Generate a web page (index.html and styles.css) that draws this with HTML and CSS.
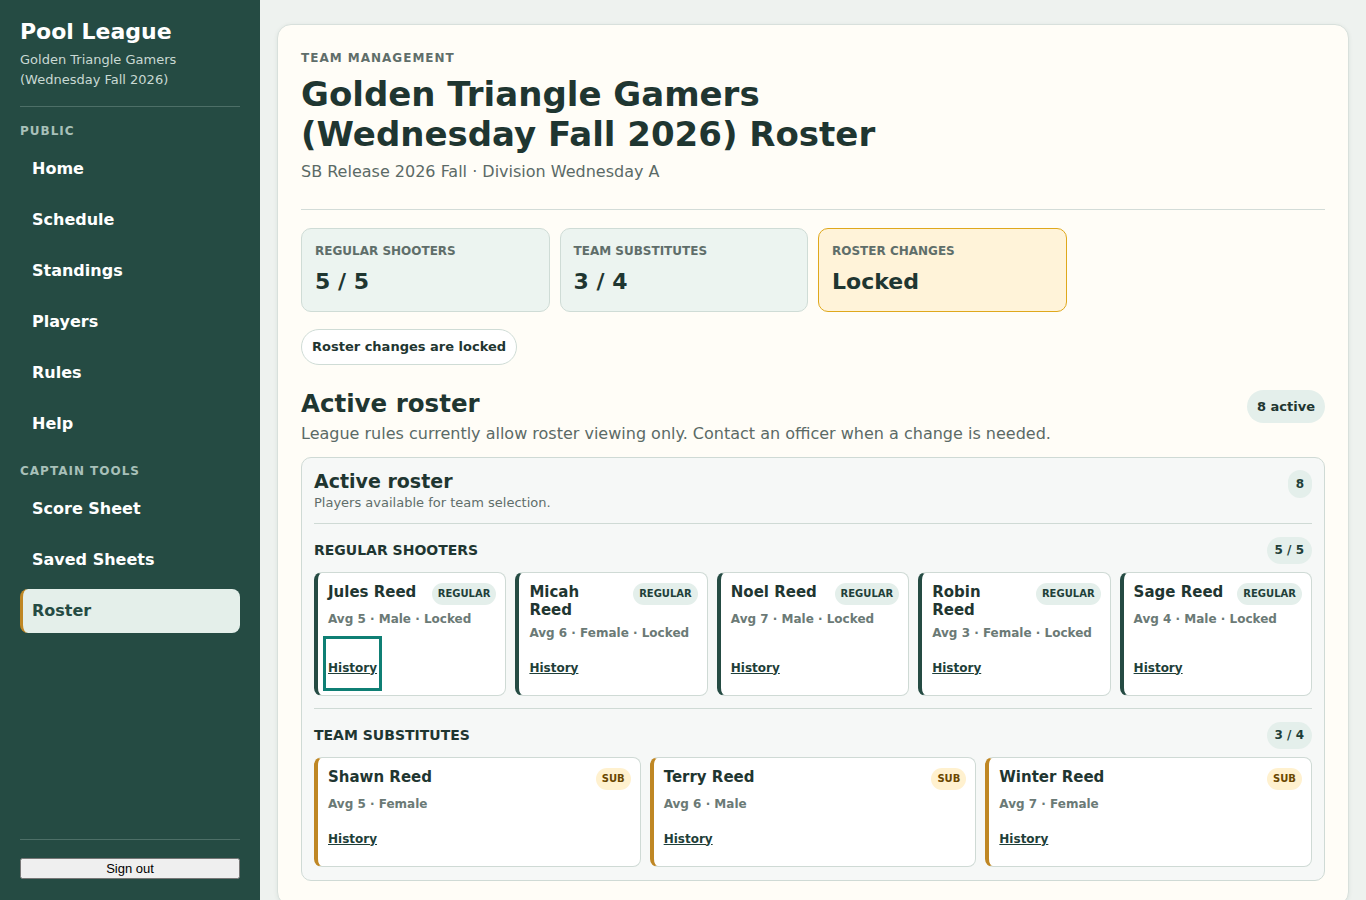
FILE: index.html
```html
<!DOCTYPE html>
<html lang="en">
<head>
  <meta charset="UTF-8" />
  <title>Roster - Pool League</title>
  <link rel="stylesheet" href="styles.css">
</head>
<body>

<div class="layout">
  <aside class="sidebar">
    <div class="brand">
      <h1>Pool League</h1>
      <p>Golden Triangle Gamers (Wednesday Fall 2026)</p>
    </div>

    <nav class="nav">
      <div class="nav-label">Public</div>
      <a class="nav-item" href="#">Home</a>
      <a class="nav-item" href="#">Schedule</a>
      <a class="nav-item" href="#">Standings</a>
      <a class="nav-item" href="#">Players</a>
      <a class="nav-item" href="#">Rules</a>
      <a class="nav-item" href="#">Help</a>
      <div class="nav-label spaced">Captain tools</div>
      <a class="nav-item" href="#">Score Sheet</a>
      <a class="nav-item" href="#">Saved Sheets</a>
      <a class="nav-item active" href="#">Roster</a>
    </nav>

    <div class="sidebar-foot">
      <button type="button">Sign out</button>
    </div>
  </aside>

  <main class="main">
    <section class="card">
      <header class="page-head">
        <div class="eyebrow">Team management</div>
        <h1>Golden Triangle Gamers (Wednesday Fall 2026) Roster</h1>
        <p class="sub">SB Release 2026 Fall · Division Wednesday A</p>
      </header>

      <div class="stats">
        <div class="stat">
          <div class="stat-label">Regular shooters</div>
          <div class="stat-value">5 / 5</div>
        </div>
        <div class="stat">
          <div class="stat-label">Team substitutes</div>
          <div class="stat-value">3 / 4</div>
        </div>
        <div class="stat warn">
          <div class="stat-label">Roster changes</div>
          <div class="stat-value">Locked</div>
        </div>
      </div>

      <div class="notice">Roster changes are locked</div>

      <div class="roster-head">
        <div>
          <h2>Active roster</h2>
          <p>League rules currently allow roster viewing only. Contact an officer when a change is needed.</p>
        </div>
        <span class="pill">8 active</span>
      </div>

      <div class="panel">
        <div class="panel-head">
          <div>
            <h3>Active roster</h3>
            <p>Players available for team selection.</p>
          </div>
          <span class="count">8</span>
        </div>

        <div class="group">
          <div class="group-head">
            <h4>Regular shooters</h4>
            <span class="count">5 / 5</span>
          </div>
          <div class="players five">
            <div class="player">
              <div class="player-top">
                <span class="name">Jules Reed</span>
                <span class="tag">REGULAR</span>
              </div>
              <div class="meta">Avg 5 · Male · Locked</div>
              <a class="history focused" href="#">History</a>
            </div>
            <div class="player">
              <div class="player-top">
                <span class="name">Micah Reed</span>
                <span class="tag">REGULAR</span>
              </div>
              <div class="meta">Avg 6 · Female · Locked</div>
              <a class="history" href="#">History</a>
            </div>
            <div class="player">
              <div class="player-top">
                <span class="name">Noel Reed</span>
                <span class="tag">REGULAR</span>
              </div>
              <div class="meta">Avg 7 · Male · Locked</div>
              <a class="history" href="#">History</a>
            </div>
            <div class="player">
              <div class="player-top">
                <span class="name">Robin Reed</span>
                <span class="tag">REGULAR</span>
              </div>
              <div class="meta">Avg 3 · Female · Locked</div>
              <a class="history" href="#">History</a>
            </div>
            <div class="player">
              <div class="player-top">
                <span class="name">Sage Reed</span>
                <span class="tag">REGULAR</span>
              </div>
              <div class="meta">Avg 4 · Male · Locked</div>
              <a class="history" href="#">History</a>
            </div>
          </div>
        </div>

        <div class="group">
          <div class="group-head">
            <h4>Team substitutes</h4>
            <span class="count">3 / 4</span>
          </div>
          <div class="players three">
            <div class="player sub">
              <div class="player-top">
                <span class="name">Shawn Reed</span>
                <span class="tag">SUB</span>
              </div>
              <div class="meta">Avg 5 · Female</div>
              <a class="history" href="#">History</a>
            </div>
            <div class="player sub">
              <div class="player-top">
                <span class="name">Terry Reed</span>
                <span class="tag">SUB</span>
              </div>
              <div class="meta">Avg 6 · Male</div>
              <a class="history" href="#">History</a>
            </div>
            <div class="player sub">
              <div class="player-top">
                <span class="name">Winter Reed</span>
                <span class="tag">SUB</span>
              </div>
              <div class="meta">Avg 7 · Female</div>
              <a class="history" href="#">History</a>
            </div>
          </div>
        </div>
      </div>
    </section>
  </main>
</div>

</body>
</html>
```

FILE: styles.css
```css
body {
  margin: 0;
  font-family: "DejaVu Sans", Verdana, sans-serif;
  background: #eef2ef;
  color: #1f3631;
}
h1, h2, h3, h4, p {
  margin: 0;
}
.layout {
  display: grid;
  grid-template-columns: 260px 1fr;
  align-items: start;
}

/* sidebar */
.sidebar {
  position: sticky;
  top: 0;
  height: 100vh;
  box-sizing: border-box;
  padding: 20px 20px 21px;
  background: #254b43;
  color: #fff;
  display: flex;
  flex-direction: column;
}
.brand {
  padding-bottom: 16px;
  border-bottom: 1px solid #4d6f67;
}
.brand h1 {
  font-size: 22px;
  line-height: 24px;
}
.brand p {
  margin-top: 6px;
  font-size: 13px;
  line-height: 20px;
  color: #c9d9d3;
}
.nav {
  display: flex;
  flex-direction: column;
  gap: 7px;
  margin-top: 15px;
}
.nav-label {
  font-size: 12px;
  line-height: 18px;
  font-weight: bold;
  letter-spacing: 1px;
  text-transform: uppercase;
  color: #a8c0b9;
}
.nav-label.spaced {
  margin-top: 9px;
}
.nav-item {
  display: block;
  height: 44px;
  line-height: 44px;
  padding: 0 12px;
  font-size: 16px;
  font-weight: bold;
  color: #fff;
  text-decoration: none;
  border-radius: 8px;
}
.nav-item.active {
  background: #e4efea;
  color: #254b43;
  border-left: 3px solid #bf8724;
  padding-left: 9px;
}
.sidebar-foot {
  margin-top: auto;
  padding-top: 18px;
  border-top: 1px solid #4d6f67;
}
.sidebar-foot button {
  width: 100%;
  font: 13px "Liberation Sans", Arial, sans-serif;
}

/* main card */
.main {
  padding: 24px 17px;
}
.card {
  background: #fffdf7;
  border: 1px solid #d8e0dc;
  border-radius: 14px;
  box-shadow: 0 1px 4px rgba(30, 60, 50, 0.08);
  padding: 25px 23px 24px;
}
.page-head {
  padding-bottom: 27px;
  border-bottom: 1px solid #d3dcd8;
}
.eyebrow {
  font-size: 12px;
  line-height: 16px;
  font-weight: bold;
  letter-spacing: 1px;
  text-transform: uppercase;
  color: #5f6e6a;
}
.page-head h1 {
  margin-top: 8px;
  max-width: 640px;
  font-size: 34px;
  line-height: 40px;
}
.page-head .sub {
  margin-top: 8px;
  font-size: 16px;
  line-height: 20px;
  color: #5b6a66;
}

.stats {
  margin-top: 18px;
  display: grid;
  grid-template-columns: repeat(4, 1fr);
  gap: 10px;
}
.stat {
  background: #ecf4f0;
  border: 1px solid #cfdcd6;
  border-radius: 10px;
  padding: 15px 13px;
}
.stat.warn {
  background: #fff3d9;
  border-color: #dfa81c;
}
.stat-label {
  font-size: 12px;
  line-height: 15px;
  font-weight: bold;
  text-transform: uppercase;
  color: #5f6e6a;
}
.stat-value {
  margin-top: 9px;
  font-size: 22px;
  line-height: 28px;
  font-weight: bold;
}

.notice {
  display: inline-block;
  margin-top: 17px;
  padding: 9px 10px;
  font-size: 13px;
  line-height: 16px;
  font-weight: bold;
  background: #fff;
  border: 1px solid #cfdcd6;
  border-radius: 18px;
}

.roster-head {
  margin-top: 24px;
  display: flex;
  justify-content: space-between;
  align-items: flex-start;
}
.roster-head h2 {
  font-size: 24.5px;
  line-height: 30px;
}
.roster-head p {
  margin-top: 5px;
  font-size: 16px;
  line-height: 20px;
  color: #5b6a66;
}
.pill {
  margin-top: 1px;
  padding: 8px 10px;
  font-size: 13px;
  line-height: 17px;
  font-weight: bold;
  background: #e4efeb;
  border-radius: 17px;
}

/* roster panel */
.panel {
  margin-top: 13px;
  background: #f6f8f7;
  border: 1px solid #cfdad5;
  border-radius: 10px;
  padding: 12px 12px 13px;
}
.panel-head {
  display: flex;
  justify-content: space-between;
  align-items: flex-start;
  padding-bottom: 12px;
  border-bottom: 1px solid #cfdad5;
}
.panel-head h3 {
  font-size: 19px;
  line-height: 22px;
}
.panel-head p {
  margin-top: 2px;
  font-size: 13px;
  line-height: 17px;
  color: #5f6e6a;
}
.count {
  padding: 6px 8px;
  font-size: 12px;
  line-height: 16px;
  font-weight: bold;
  background: #e4efeb;
  border-radius: 14px;
  color: #1f3f39;
}
.group {
  padding-top: 13px;
}
.group + .group {
  margin-top: 12px;
  border-top: 1px solid #cfdad5;
}
.group-head {
  display: flex;
  justify-content: space-between;
  align-items: center;
}
.group-head h4 {
  font-size: 14px;
  line-height: 17px;
  text-transform: uppercase;
}
.group-head .count {
  line-height: 15px;
}
.players {
  margin-top: 8px;
  display: grid;
  gap: 9px;
}
.players.five {
  grid-template-columns: repeat(5, 1fr);
}
.players.three {
  grid-template-columns: repeat(3, 1fr);
}
.player {
  background: #fff;
  border: 1px solid #cfdad5;
  border-left: 4px solid #254b43;
  border-radius: 8px;
  padding: 10px 9px 9px 10px;
  display: flex;
  flex-direction: column;
}
.player.sub {
  border-left-color: #bf8724;
}
.player-top {
  display: flex;
  justify-content: space-between;
  align-items: flex-start;
  gap: 10px;
}
.name {
  min-width: 0;
  font-size: 15px;
  line-height: 18px;
  font-weight: bold;
}
.tag {
  flex-shrink: 0;
  padding: 5px 6px;
  font-size: 10px;
  line-height: 12px;
  font-weight: bold;
  background: #e4efeb;
  color: #1f3f39;
  border-radius: 11px;
}
.player.sub .tag {
  background: #fff1cf;
  color: #6a4700;
}
.meta {
  margin-top: 6px;
  font-size: 12px;
  line-height: 16px;
  font-weight: bold;
  color: #6b7a76;
}
.history {
  margin-top: auto;
  padding-top: 8px;
  align-self: flex-start;
  display: flex;
  align-items: center;
  min-height: 37px;
  box-sizing: content-box;
  font-size: 12px;
  font-weight: bold;
  color: #1f3f39;
}
.history.focused {
  outline: 3px solid #0f7f74;
  outline-offset: 2px;
}
```
